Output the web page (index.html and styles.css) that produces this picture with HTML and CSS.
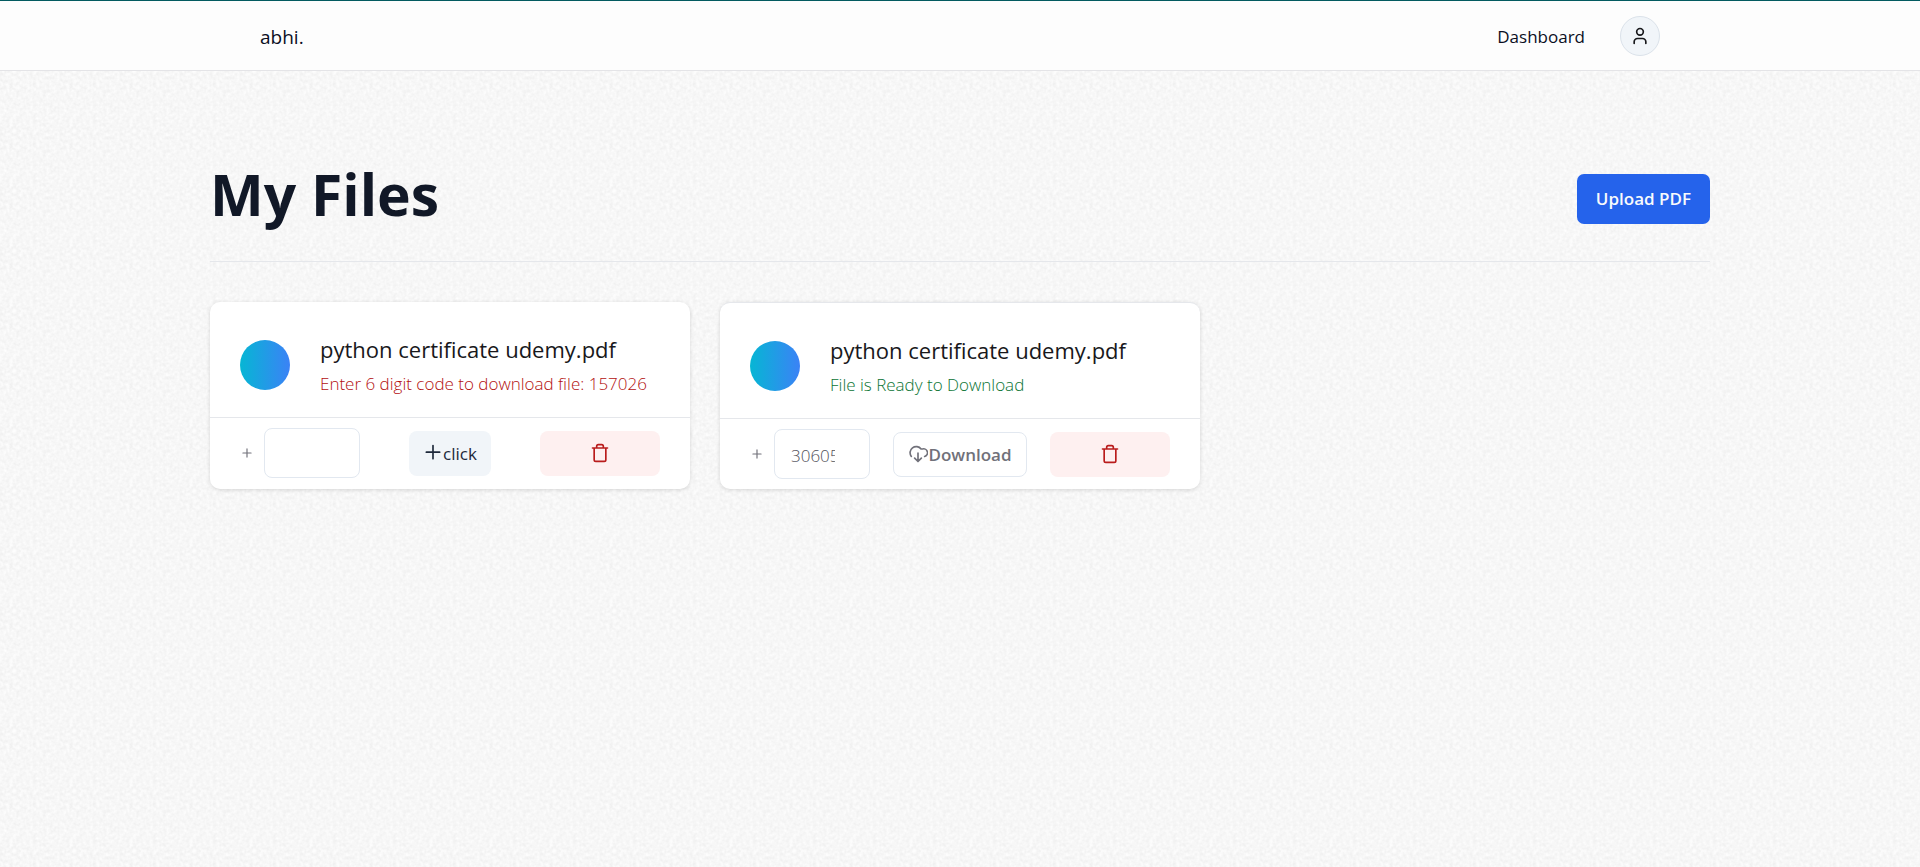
FILE: index.html
```html
<!DOCTYPE html>
<html lang="en">
<head>
<meta charset="utf-8">
<title>My Files</title>
<meta name="viewport" content="width=device-width, initial-scale=1">
<link rel="stylesheet" href="styles.css">
</head>
<body>
<nav class="navbar">
  <div class="navbar-inner">
    <a class="brand" href="#">abhi.</a>
    <div class="nav-links">
      <a class="nav-link" href="#">Dashboard</a>
      <button class="avatar" type="button" aria-label="Account">
        <svg class="icon-user" viewBox="0 0 24 24" aria-hidden="true"><path d="M19 21v-2a4 4 0 0 0-4-4H9a4 4 0 0 0-4 4v2"/><circle cx="12" cy="7" r="4"/></svg>
      </button>
    </div>
  </div>
</nav>
<main class="page">
  <header class="page-header">
    <h1 class="page-title">My Files</h1>
    <button class="upload" type="button">Upload PDF</button>
  </header>
  <ul class="files">
    <li class="file">
      <a class="file-link" href="#">
        <span class="dot"></span>
        <span class="file-text">
          <span class="file-name">python certificate udemy.pdf</span>
          <span class="status status-locked">Enter 6 digit code to download file: 157026</span>
        </span>
      </a>
      <div class="actions">
        <div class="code">
          <svg class="icon-plus" viewBox="0 0 24 24" aria-hidden="true"><path d="M5 12h14M12 5v14"/></svg>
          <input class="code-input" type="text" inputmode="numeric" aria-label="Download code">
        </div>
        <button class="btn btn-click" type="button">
          <svg class="icon" viewBox="0 0 24 24" aria-hidden="true"><path d="M4 11h16M12 3v16"/></svg><span>click</span>
        </button>
        <button class="btn btn-delete" type="button" aria-label="Delete">
          <svg class="icon" viewBox="0 0 24 24" aria-hidden="true"><path d="M3 6h18M19 6v14c0 1-1 2-2 2H7c-1 0-2-1-2-2V6M8 6V4c0-1 1-2 2-2h4c1 0 2 1 2 2v2"/></svg>
        </button>
      </div>
    </li>
    <li class="file file-ready">
      <a class="file-link" href="#">
        <span class="dot"></span>
        <span class="file-text">
          <span class="file-name">python certificate udemy.pdf</span>
          <span class="status status-ready">File is Ready to Download</span>
        </span>
      </a>
      <div class="actions">
        <div class="code">
          <svg class="icon-plus" viewBox="0 0 24 24" aria-hidden="true"><path d="M5 12h14M12 5v14"/></svg>
          <input class="code-input" type="text" inputmode="numeric" aria-label="Download code" value="30605">
        </div>
        <button class="btn btn-download" type="button">
          <svg class="icon" viewBox="0 0 24 24" aria-hidden="true"><path d="M4 14.900A7 7 0 1 1 15.710 6h1.790a4.500 4.500 0 0 1 2.500 9M12 11v9M8 17l4 4 4-4"/></svg><span>Download</span>
        </button>
        <button class="btn btn-delete" type="button" aria-label="Delete">
          <svg class="icon" viewBox="0 0 24 24" aria-hidden="true"><path d="M3 6h18M19 6v14c0 1-1 2-2 2H7c-1 0-2-1-2-2V6M8 6V4c0-1 1-2 2-2h4c1 0 2 1 2 2v2"/></svg>
        </button>
      </div>
    </li>
  </ul>
</main>
</body>
</html>
```
FILE: styles.css
```css
* { box-sizing: border-box; }

body {
  margin: 0;
  min-height: 100vh;
  color: #18181b;
  font-family: "Open Sans", "Noto Sans", sans-serif;
  font-size: 17px;
  line-height: 24px;
  background-color: #f7f7f7;
  background-image: url("data:image/svg+xml,%3Csvg xmlns='http://www.w3.org/2000/svg' width='60' height='60'%3E%3Cfilter id='n' x='0' y='0' width='100%25' height='100%25' color-interpolation-filters='sRGB'%3E%3CfeTurbulence type='fractalNoise' baseFrequency='0.3' numOctaves='2' seed='4' stitchTiles='stitch'/%3E%3CfeColorMatrix values='0.08 0 0 0 0.928 0.08 0 0 0 0.928 0.08 0 0 0 0.928 0 0 0 0 1'/%3E%3C/filter%3E%3Crect width='60' height='60' filter='url(%23n)'/%3E%3C/svg%3E");
}

a { color: inherit; text-decoration: none; }
button, input { font: inherit; }
button { cursor: pointer; }

svg {
  fill: none;
  stroke: currentColor;
  stroke-width: 2;
  stroke-linecap: round;
  stroke-linejoin: round;
}

.navbar {
  background: #fdfdfd;
  border-top: 1px solid #035b60;
  border-bottom: 1px solid #e4e4e7;
}

.navbar-inner {
  display: flex;
  align-items: center;
  justify-content: space-between;
  max-width: 1500px;
  height: 69px;
  margin: 0 auto;
  padding: 0 50px;
  color: #0b0f1f;
}

.brand, .nav-link { padding-top: 2px; font-weight: 500; }
.brand { font-size: 19px; }
.nav-links { display: flex; align-items: center; gap: 35px; }

.avatar {
  display: grid;
  place-items: center;
  width: 40px;
  height: 40px;
  padding: 0;
  color: #18181b;
  background: #f1f5f9;
  border: 1px solid #dbe2ea;
  border-radius: 50%;
}

.icon-user { width: 20px; height: 20px; }

.page {
  max-width: 1500px;
  margin: 0 auto;
  padding-top: 90px;
}

.page-header {
  display: flex;
  align-items: center;
  justify-content: space-between;
  padding: 0 0 24px;
  border-bottom: 1px solid #e5e7eb;
}

.page-title {
  margin: 0;
  padding-bottom: 10px;
  color: #111827;
  font-size: 57px;
  font-weight: 700;
  line-height: 66px;
}

.upload {
  height: 50px;
  padding: 0 19px;
  color: #f8fafc;
  background: #2563eb;
  border: 0;
  border-radius: 7px;
  font-weight: 600;
}

.files {
  display: grid;
  grid-template-columns: repeat(3, minmax(0, 1fr));
  gap: 30px;
  margin: 40px 0 0;
  padding: 0;
  list-style: none;
}

.file {
  background: #fff;
  border-radius: 10px;
  box-shadow: 0 1px 4px rgba(0, 0, 0, 0.14);
}

.file-ready { border-top: 1px solid #e5e7eb; }

.file-link {
  display: flex;
  align-items: center;
  gap: 30px;
  padding: 30px 30px 20px;
}

.dot {
  flex: none;
  width: 50px;
  height: 50px;
  border-radius: 50%;
  background: linear-gradient(to right, #06b6d4, #3b82f6);
}

.file-text { display: flex; flex-direction: column; gap: 3px; min-width: 0; }
.file-name { font-size: 22px; font-weight: 500; line-height: 35px; }
.status { font-weight: 300; line-height: 27px; white-space: nowrap; }
.status-locked { color: #b30f0f; }
.status-ready { color: #0b7434; }

.actions {
  display: grid;
  grid-template-columns: repeat(3, minmax(0, 1fr));
  align-items: center;
  gap: 30px;
  padding: 10px 30px;
  border-top: 1px solid #e5e7eb;
}

.code {
  display: flex;
  align-items: center;
  gap: 10px;
  color: #71717a;
}

.icon-plus { flex: none; width: 14px; height: 14px; }

.code-input {
  flex: 1;
  min-width: 0;
  height: 50px;
  padding: 2px 34px 0 16px;
  color: #52525b;
  background: #fff;
  border: 1px solid #e2e8f0;
  border-radius: 8px;
  font-weight: 300;
}

.btn {
  display: flex;
  align-items: center;
  justify-content: center;
  justify-self: center;
  height: 45px;
  padding: 0 14px;
  border: 0;
  border-radius: 8px;
}

.btn span { padding-top: 2px; }
.icon { flex: none; width: 20px; height: 20px; }
.btn-click { color: #1e293b; background: #f1f5f9; font-weight: 500; }
.btn-download { color: #71717a; background: #fff; border: 1px solid #e2e8f0; font-weight: 600; }
.btn-delete { width: 100%; color: #b91c1c; background: #fef0f0; }
```
